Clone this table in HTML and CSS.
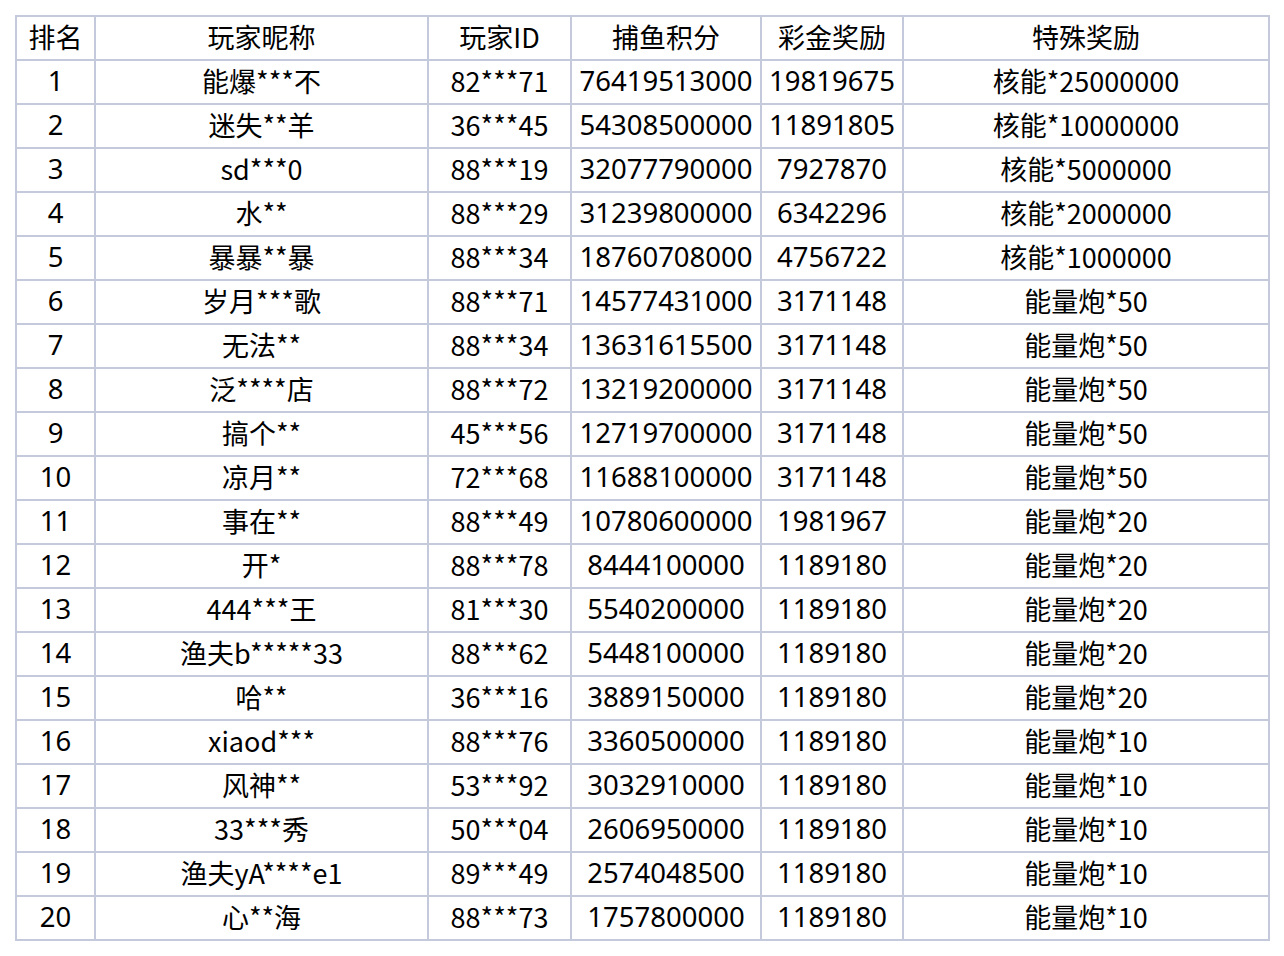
FILE: index.html
```html
<!DOCTYPE html>
<html lang="zh-CN">
<head>
<meta charset="utf-8">
<title>排行榜</title>
<link rel="stylesheet" href="styles.css">
</head>
<body>
<table class="rank">
<colgroup>
<col class="c-rank"><col class="c-name"><col class="c-id"><col class="c-score"><col class="c-bonus"><col class="c-special">
</colgroup>
<thead>
<tr><th>排名</th><th>玩家昵称</th><th>玩家ID</th><th>捕鱼积分</th><th>彩金奖励</th><th>特殊奖励</th></tr>
</thead>
<tbody>
<tr><td>1</td><td>能爆***不</td><td>82***71</td><td>76419513000</td><td>19819675</td><td>核能*25000000</td></tr>
<tr><td>2</td><td>迷失**羊</td><td>36***45</td><td>54308500000</td><td>11891805</td><td>核能*10000000</td></tr>
<tr><td>3</td><td>sd***0</td><td>88***19</td><td>32077790000</td><td>7927870</td><td>核能*5000000</td></tr>
<tr><td>4</td><td>水**</td><td>88***29</td><td>31239800000</td><td>6342296</td><td>核能*2000000</td></tr>
<tr><td>5</td><td>暴暴**暴</td><td>88***34</td><td>18760708000</td><td>4756722</td><td>核能*1000000</td></tr>
<tr><td>6</td><td>岁月***歌</td><td>88***71</td><td>14577431000</td><td>3171148</td><td>能量炮*50</td></tr>
<tr><td>7</td><td>无法**</td><td>88***34</td><td>13631615500</td><td>3171148</td><td>能量炮*50</td></tr>
<tr><td>8</td><td>泛****店</td><td>88***72</td><td>13219200000</td><td>3171148</td><td>能量炮*50</td></tr>
<tr><td>9</td><td>搞个**</td><td>45***56</td><td>12719700000</td><td>3171148</td><td>能量炮*50</td></tr>
<tr><td>10</td><td>凉月**</td><td>72***68</td><td>11688100000</td><td>3171148</td><td>能量炮*50</td></tr>
<tr><td>11</td><td>事在**</td><td>88***49</td><td>10780600000</td><td>1981967</td><td>能量炮*20</td></tr>
<tr><td>12</td><td>开*</td><td>88***78</td><td>8444100000</td><td>1189180</td><td>能量炮*20</td></tr>
<tr><td>13</td><td>444***王</td><td>81***30</td><td>5540200000</td><td>1189180</td><td>能量炮*20</td></tr>
<tr><td>14</td><td>渔夫b*****33</td><td>88***62</td><td>5448100000</td><td>1189180</td><td>能量炮*20</td></tr>
<tr><td>15</td><td>哈**</td><td>36***16</td><td>3889150000</td><td>1189180</td><td>能量炮*20</td></tr>
<tr><td>16</td><td>xiaod***</td><td>88***76</td><td>3360500000</td><td>1189180</td><td>能量炮*10</td></tr>
<tr><td>17</td><td>风神**</td><td>53***92</td><td>3032910000</td><td>1189180</td><td>能量炮*10</td></tr>
<tr><td>18</td><td>33***秀</td><td>50***04</td><td>2606950000</td><td>1189180</td><td>能量炮*10</td></tr>
<tr><td>19</td><td>渔夫yA****e1</td><td>89***49</td><td>2574048500</td><td>1189180</td><td>能量炮*10</td></tr>
<tr><td>20</td><td>心**海</td><td>88***73</td><td>1757800000</td><td>1189180</td><td>能量炮*10</td></tr>
</tbody>
</table>
</body>
</html>
```
FILE: styles.css
```css
html, body {
  margin: 0;
  padding: 0;
  background: #ffffff;
}
body {
  padding: 15px 0 0 15px;
  font-family: "Noto Sans CJK SC", "Noto Sans", sans-serif;
  color: #000000;
}
.rank {
  border-collapse: collapse;
  table-layout: fixed;
  width: 1253px;
}
.c-rank { width: 79px; }
.c-name { width: 333px; }
.c-id { width: 143px; }
.c-score { width: 190px; }
.c-bonus { width: 142px; }
.c-special { width: 366px; }
.rank th,
.rank td {
  border: 2px solid #c4cadb;
  height: 39px;
  padding: 0 0 3px 0;
  text-align: center;
  vertical-align: middle;
  font-size: 27px;
  font-weight: 400;
  line-height: 39px;
  white-space: nowrap;
  overflow: hidden;
}
/* purely numeric columns: rank, score, bonus */
.rank td:nth-child(1),
.rank td:nth-child(4),
.rank td:nth-child(5) {
  font-family: "Noto Sans", "Noto Sans CJK SC", sans-serif;
  font-size: 27.5px;
}
```
